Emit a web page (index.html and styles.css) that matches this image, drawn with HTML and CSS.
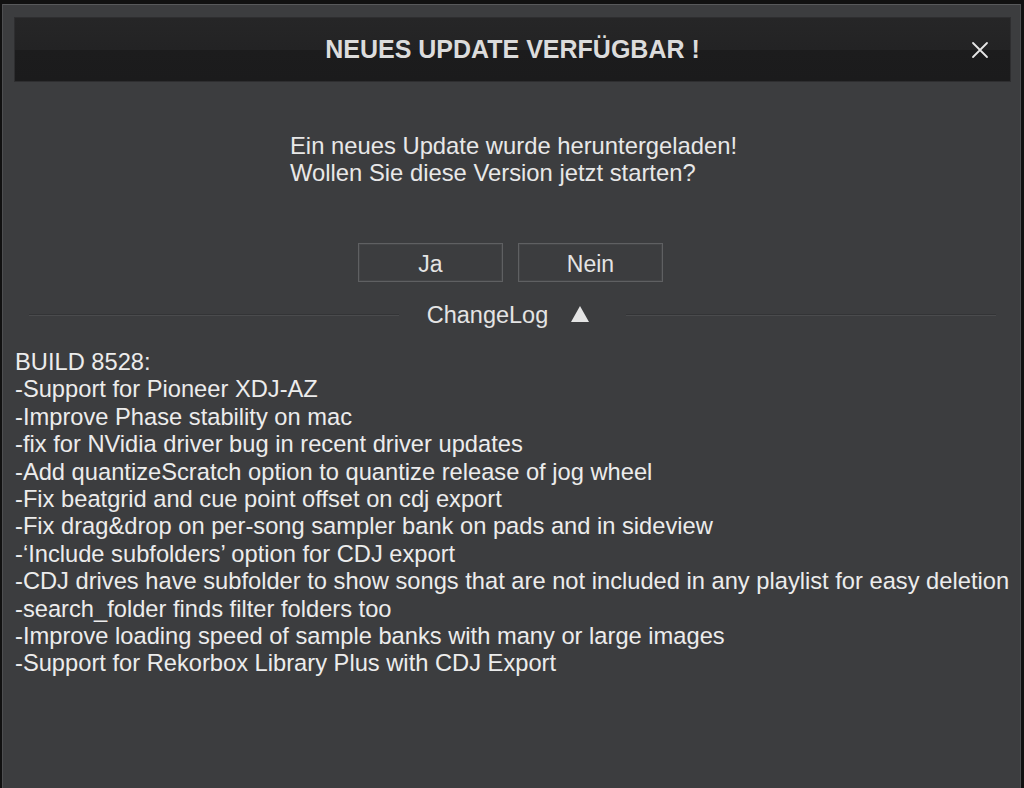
FILE: index.html
```html
<!DOCTYPE html>
<html lang="de">
<head>
<meta charset="utf-8">
<link rel="stylesheet" href="styles.css">
</head>
<body>
<div class="window">
  <div class="titlebar">
    <div class="title">NEUES UPDATE VERFÜGBAR !</div>
    <div class="close">
      <svg width="20" height="20" viewBox="0 0 20 20"><path d="M3 3 L17 17 M17 3 L3 17" stroke="#e6e6e6" stroke-width="1.8" stroke-linecap="round"/></svg>
    </div>
  </div>
  <div class="message">
    <p>Ein neues Update wurde heruntergeladen!</p>
    <p>Wollen Sie diese Version jetzt starten?</p>
  </div>
  <div class="buttons">
    <div class="btn">Ja</div>
    <div class="btn">Nein</div>
  </div>
  <div class="divider">
    <span class="line"></span>
    <span class="label">ChangeLog</span>
    <svg class="tri" width="20" height="18" viewBox="0 0 20 18"><path d="M10 1 L19 17 L1 17 Z" fill="#e4e4e4"/></svg>
    <span class="line"></span>
  </div>
  <div class="log">
    <p>BUILD 8528:</p>
    <p>-Support for Pioneer XDJ-AZ</p>
    <p>-Improve Phase stability on mac</p>
    <p>-fix for NVidia driver bug in recent driver updates</p>
    <p>-Add quantizeScratch option to quantize release of jog wheel</p>
    <p>-Fix beatgrid and cue point offset on cdj export</p>
    <p>-Fix drag&amp;drop on per-song sampler bank on pads and in sideview</p>
    <p>-‘Include subfolders’ option for CDJ export</p>
    <p>-CDJ drives have subfolder to show songs that are not included in any playlist for easy deletion</p>
    <p>-search_folder finds filter folders too</p>
    <p>-Improve loading speed of sample banks with many or large images</p>
    <p>-Support for Rekorbox Library Plus with CDJ Export</p>
  </div>
</div>
</body>
</html>
```
FILE: styles.css
```css
* { box-sizing: border-box; }
html, body { margin: 0; padding: 0; }
body {
  width: 1024px;
  height: 788px;
  background: #111;
  padding-top: 4px;
  overflow: hidden;
  font-family: "Liberation Sans", Arial, sans-serif;
}
.window {
  margin: 0 3px 0 2px;
  height: 784px;
  background: #3c3d3f;
  border-top: 1px solid #58595b;
  border-left: 1px solid #4e4f51;
  border-right: 1px solid #4e4f51;
  padding: 12px 9px 0 11px;
  color: #e8e8e8;
}
.titlebar {
  position: relative;
  height: 65px;
  background: linear-gradient(#262627 0%, #232324 50%, #1c1c1d 51%, #1b1b1c 100%);
  border: 1px solid #2e2e30;
  display: flex;
  align-items: center;
  justify-content: center;
}
.title {
  font-weight: bold;
  font-size: 25px;
  color: #dcdcdc;
}
.close {
  position: absolute;
  right: 20px;
  top: 22px;
  width: 20px;
  height: 20px;
}
.close svg { display: block; }
.message {
  padding-top: 50px;
  padding-left: 276px;
  font-size: 23.8px;
  line-height: 27px;
}
.message p { margin: 0; }
.buttons {
  display: flex;
  gap: 15px;
  justify-content: flex-start;
  padding-left: 344px;
  margin-top: 57px;
}
.btn {
  width: 145px;
  height: 39px;
  padding-top: 3px;
  border: 1px solid #5f6062;
  box-shadow: inset 0 0 0 1px #444547;
  display: flex;
  align-items: center;
  justify-content: center;
  font-size: 23px;
  color: #e4e4e4;
}
.divider {
  display: flex;
  align-items: center;
  height: 32px;
  margin-top: 17px;
  padding: 0 15px;
}
.line {
  flex: 1;
  height: 2px;
  background: #4a4b4d;
  border-top: 1px solid #333436;
}
.label {
  font-size: 23.5px;
  color: #e4e4e4;
  margin-left: 28px;
}
.tri {
  margin: 0 36px 0 22px;
  position: relative;
  top: -1px;
}
.log {
  padding-top: 18px;
  padding-left: 1px;
  font-size: 23.7px;
  line-height: 27.4px;
  color: #ececec;
  white-space: nowrap;
}
.log p { margin: 0; }
```
